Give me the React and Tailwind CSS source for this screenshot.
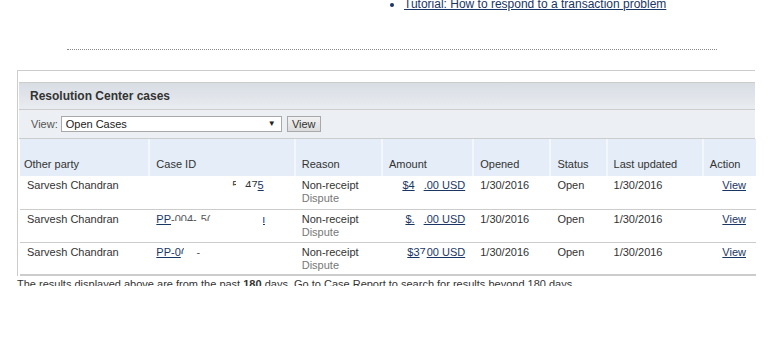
import React from "react";

const cols = [
  { label: "Other party", w: "w-[129px]" },
  { label: "Case ID", w: "w-[145px]" },
  { label: "Reason", w: "w-[87px]" },
  { label: "Amount", w: "w-[91px]" },
  { label: "Opened", w: "w-[77px]" },
  { label: "Status", w: "w-[56px]" },
  { label: "Last updated", w: "w-[96px]" },
  { label: "Action", w: "w-[53px]" },
];

// top half of glyphs only, the rest of the id is masked in the screenshot
function Frag({ children, className = "" }) {
  return (
    <span className={`inline-block h-[6px] overflow-hidden align-top mt-[2px] ${className}`}>
      <span className="block leading-[13px] -mt-[2px]">{children}</span>
    </span>
  );
}

function CaseId({ n }) {
  if (n === 0)
    return (
      <span className="pl-[76px] whitespace-nowrap">
        <Frag className="w-[4px]">5</Frag>
        <span className="ml-[9px]">
          <Frag>4</Frag>
          <Frag>7</Frag>
          <a className="underline text-[#1a3665]">5</a>
        </span>
      </span>
    );
  if (n === 1)
    return (
      <span className="whitespace-nowrap">
        <a className="underline text-[#1a3665]">PP</a>
        <Frag className="text-[#555]">-004-</Frag>
        <Frag className="ml-[4px] text-[#555]">5(</Frag>
        <span className="inline-block w-[52px]" />
        <span className="text-[#1a3665] inline-block h-[13px] w-[3px] overflow-hidden align-top mt-[4px]">
          <span className="block leading-[13px] -mt-[4px] underline">i</span>
        </span>
      </span>
    );
  return (
    <span className="whitespace-nowrap">
      <a className="underline text-[#1a3665]">PP-0</a>
      <Frag className="text-[#1a3665]">(</Frag>
      <span className="inline-block w-[12px]" />
      <Frag className="text-[#555]">-</Frag>
    </span>
  );
}

function Amount({ n }) {
  const head = ["$4", "$.", "$3"][n];
  return (
    <span className="whitespace-nowrap text-[#1a3665]">
      <a className="underline">{head}</a>
      {n === 2 && <Frag>7</Frag>}
      <span className={`inline-block ${n === 2 ? "w-[1px]" : "w-[9px]"}`} />
      <a className="underline">{n === 2 ? "00 USD" : ".00 USD"}</a>
    </span>
  );
}

export default function App() {
  return (
    <div
      className="w-[768px] h-[360px] overflow-hidden bg-white text-[#333] text-[11px]"
      style={{ fontFamily: '"Liberation Sans", Arial, sans-serif' }}
    >
      {/* help links, list is scrolled above the fold */}
      <ul className="list-disc pl-[404px] -mt-[3px] text-[12px] leading-[14px] text-[#1a3665]">
        <li>
          <a className="underline">Tutorial: How to respond to a transaction problem</a>
        </li>
      </ul>

      <div className="mt-[38px] ml-[67px] w-[650px] border-t border-dotted border-[#888]" />

      <div className="mt-[20px] ml-[17px] w-[738px] border-t border-l border-[#ccc] pt-[11px] pl-[1px]">
        <div className="border-t border-[#ccc] bg-gradient-to-b from-[#d8dde4] to-[#e9ecf0] h-[27px] pl-[11px] flex items-center">
          <h2 className="text-[12px] font-bold text-[#333]">Resolution Center cases</h2>
        </div>
        <div className="border-t border-b border-[#ccc] bg-[#eceff3] h-[30px] flex items-center pl-[12px] gap-[3px]">
          <span className="text-[#555]">View:</span>
          <div className="w-[221px] h-[16px] bg-white border border-[#a9a9a9] flex items-center justify-between pl-[4px] pr-[5px]">
            <span className="text-[#222]">Open Cases</span>
            <span className="text-[8px] text-[#222]">▼</span>
          </div>
          <button className="ml-[2px] w-[34px] h-[16px] bg-gradient-to-b from-[#f2f2f2] to-[#dcdcdc] border border-[#a9a9a9] text-[#333] text-[11px] leading-[14px]">
            View
          </button>
        </div>

        <table className="table-fixed border-collapse ml-[1px] w-[736px]">
          <thead>
            <tr className="h-[37px] bg-[#e4edf8]">
              {cols.map((c, i) => (
                <th
                  key={c.label}
                  className={`${c.w} align-bottom text-left font-normal pb-[4px] ${i === 0 ? "pl-[4px]" : "pl-[6px] border-l-2 border-[#f3f6fa]"}`}
                >
                  {c.label}
                </th>
              ))}
            </tr>
          </thead>
          <tbody>
            {[0, 1, 2].map((n) => (
              <tr key={n} className={`h-[33px] align-top ${n === 2 ? "border-b-2" : "border-b"} border-[#ccc]`}>
                <td className="pl-[7px] pt-[3px] leading-[13px]">Sarvesh Chandran</td>
                <td className="pl-[7px] pt-[3px] leading-[13px]">
                  <CaseId n={n} />
                </td>
                <td className="pl-[7px] pt-[3px] leading-[13px]">
                  Non-receipt
                  <br />
                  <span className="text-[#777]">Dispute</span>
                </td>
                <td className="pr-[8px] pt-[3px] leading-[13px] text-right">
                  <Amount n={n} />
                </td>
                <td className="pl-[7px] pt-[3px] leading-[13px]">1/30/2016</td>
                <td className="pl-[7px] pt-[3px] leading-[13px]">Open</td>
                <td className="pl-[7px] pt-[3px] leading-[13px]">1/30/2016</td>
                <td className="pr-[10px] pt-[3px] leading-[13px] text-right">
                  <a className="underline text-[#1a3665]">View</a>
                </td>
              </tr>
            ))}
          </tbody>
        </table>
      </div>

      {/* note below the table, cut off at the bottom */}
      <div className="ml-[17px] mt-[3px] h-[7px] overflow-hidden">
        <p className="leading-[13px] -mt-[1px] whitespace-nowrap">
          The results displayed above are from the past <b>180</b> days. Go to Case Report to search for results beyond 180 days.
        </p>
      </div>
    </div>
  );
}
